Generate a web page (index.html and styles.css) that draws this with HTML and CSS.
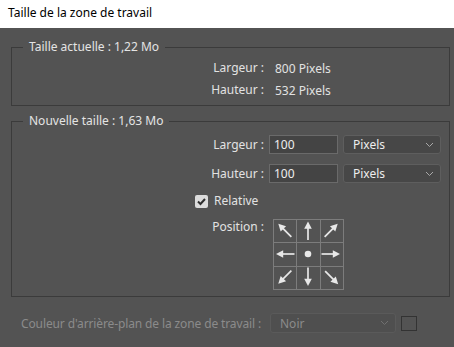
FILE: index.html
```html
<!DOCTYPE html>
<html lang="fr">
<head>
<meta charset="utf-8">
<title>Taille de la zone de travail</title>
<link rel="stylesheet" href="styles.css">
</head>
<body>
<div class="titlebar">Taille de la zone de travail</div>
<div class="dialog">
  <fieldset class="group group-current">
    <legend>Taille actuelle : 1,22 Mo</legend>
    <div class="info-grid">
      <span class="lbl">Largeur :</span><span class="val">800 Pixels</span>
      <span class="lbl">Hauteur :</span><span class="val">532 Pixels</span>
    </div>
  </fieldset>

  <fieldset class="group group-new">
    <legend>Nouvelle taille : 1,63 Mo</legend>
    <div class="form-grid">
      <span class="lbl">Largeur :</span>
      <div class="ctrls">
        <div class="input">100</div>
        <div class="select">Pixels<svg class="chev" width="9" height="6" viewBox="0 0 9 6"><path d="M1 1 L4.5 4.5 L8 1" fill="none" stroke="#a8a8a8" stroke-width="1"/></svg></div>
      </div>
      <span class="lbl">Hauteur :</span>
      <div class="ctrls">
        <div class="input">100</div>
        <div class="select">Pixels<svg class="chev" width="9" height="6" viewBox="0 0 9 6"><path d="M1 1 L4.5 4.5 L8 1" fill="none" stroke="#a8a8a8" stroke-width="1"/></svg></div>
      </div>
      <div class="check-row">
        <span class="checkbox"><svg width="13" height="13" viewBox="0 0 13 13"><path d="M3 6.5 L5.5 9 L10 4" fill="none" stroke="#2e2e2e" stroke-width="2"/></svg></span>
        <span class="check-lbl">Relative</span>
      </div>
      <span class="lbl lbl-top">Position :</span>
      <svg class="anchor" width="71" height="71" viewBox="0 0 71 71">
        <defs>
          <g id="arr">
            <line x1="0" y1="9" x2="0" y2="-3" stroke="#e8e8e8" stroke-width="1.7"/>
            <polygon points="0,-9.5 -3.8,-2.3 3.8,-2.3" fill="#e8e8e8"/>
          </g>
        </defs>
        <g fill="none" stroke="#7c7c7c" stroke-width="1">
          <rect x="0.5" y="0.5" width="70" height="70"/>
          <line x1="23.5" y1="0" x2="23.5" y2="71"/>
          <line x1="47.5" y1="0" x2="47.5" y2="71"/>
          <line x1="0" y1="23.5" x2="71" y2="23.5"/>
          <line x1="0" y1="47.5" x2="71" y2="47.5"/>
        </g>
        <use href="#arr" transform="translate(12,11.5) rotate(-45)"/>
        <use href="#arr" transform="translate(35,12)"/>
        <use href="#arr" transform="translate(58,11.5) rotate(45)"/>
        <use href="#arr" transform="translate(12.5,35) rotate(-90)"/>
        <circle cx="35" cy="35" r="3.3" fill="#e8e8e8"/>
        <use href="#arr" transform="translate(57.5,35) rotate(90)"/>
        <use href="#arr" transform="translate(12,58) rotate(-135)"/>
        <use href="#arr" transform="translate(35,57.5) rotate(180)"/>
        <use href="#arr" transform="translate(58.5,58.5) rotate(135)"/>
      </svg>
    </div>
  </fieldset>

  <div class="bg-row">
    <span class="bg-lbl">Couleur d'arrière-plan de la zone de travail :</span>
    <div class="select select-disabled">Noir<svg class="chev" width="9" height="6" viewBox="0 0 9 6"><path d="M1 1 L4.5 4.5 L8 1" fill="none" stroke="#707070" stroke-width="1"/></svg></div>
    <span class="swatch"></span>
  </div>
</div>
</body>
</html>
```

FILE: styles.css
```css
html, body {
  margin: 0;
  padding: 0;
}
body {
  width: 454px;
  height: 347px;
  overflow: hidden;
  background: #535353;
  font-family: "Noto Sans", "Open Sans", sans-serif;
  font-size: 12px;
  color: #e2e2e2;
}
.titlebar {
  height: 28px;
  box-sizing: border-box;
  background: #ffffff;
  color: #000;
  padding: 5px 0 0 8px;
  line-height: 16px;
  font-size: 12px;
}
.dialog {
  display: flex;
  flex-direction: column;
}
.group {
  margin: 0 4px 0 11px;
  border: 1px solid #3b3b3b;
  padding: 0 11px;
  min-width: 0;
}
.group legend {
  padding: 0 6px;
  line-height: 16px;
  color: #e4e4e4;
}
.group-current {
  margin-top: 11px;
  padding-top: 2px;
  padding-bottom: 4px;
}
.group-new {
  margin-top: 7px;
  padding-top: 6px;
  padding-bottom: 6px;
}
.info-grid {
  display: grid;
  grid-template-columns: 241px auto;
  column-gap: 11px;
  grid-auto-rows: 22px;
  align-items: center;
}
.lbl {
  text-align: right;
  white-space: nowrap;
  line-height: 16px;
}
.form-grid {
  display: grid;
  grid-template-columns: 241px auto;
  column-gap: 5px;
  row-gap: 10px;
  align-items: center;
}
.ctrls {
  display: flex;
  gap: 5px;
  height: 19px;
}
.input {
  width: 69px;
  box-sizing: border-box;
  height: 19px;
  background: #444444;
  border: 1px solid #6a6a6a;
  padding-left: 4px;
  line-height: 17px;
  color: #eeeeee;
}
.select {
  width: 98px;
  box-sizing: border-box;
  height: 19px;
  background: #474747;
  border: 1px solid #5e5e5e;
  border-radius: 3px;
  padding: 0 6px 0 9px;
  line-height: 17px;
  display: flex;
  align-items: center;
  justify-content: space-between;
  color: #eeeeee;
}
.check-row {
  grid-column: 1 / -1;
  display: flex;
  align-items: center;
  gap: 6px;
  padding-left: 172px;
  height: 16px;
}
.checkbox {
  width: 13px;
  height: 13px;
  background: #dcdcdc;
  border-radius: 2px;
  display: flex;
}
.check-lbl {
  line-height: 16px;
}
.lbl-top {
  align-self: start;
}
.anchor {
  display: block;
  margin-left: 4px;
}
.bg-row {
  display: flex;
  align-items: center;
  margin-top: 16px;
  padding-left: 21px;
  color: #8b8b8b;
}
.bg-lbl {
  flex: 0 0 243px;
  min-width: 0;
  white-space: nowrap;
  letter-spacing: -0.12px;
  margin-right: 6px;
}
.select-disabled {
  width: 126px;
  height: 20px;
  background: #4f4f4f;
  border-color: #5a5a5a;
  color: #8b8b8b;
  padding-left: 9px;
}
.swatch {
  width: 16px;
  height: 15px;
  box-sizing: border-box;
  border: 1px solid #333333;
  margin-left: 5px;
}
```
